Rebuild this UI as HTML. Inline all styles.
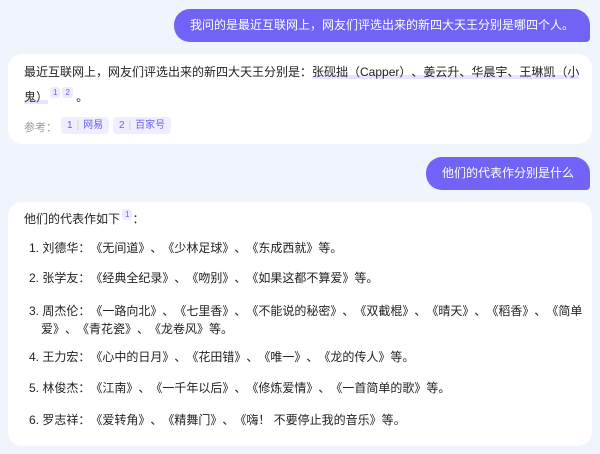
<!DOCTYPE html>
<html><head><meta charset="utf-8"><style>
body{margin:0;width:600px;height:454px;overflow:hidden;background:#f0f4fd;font-family:"Liberation Sans","Noto Sans CJK SC",sans-serif;font-size:12px;color:#222;text-spacing-trim:space-all;}
.ub{position:absolute;right:10px;background:#7063f6;color:#fff;border-radius:16px 16px 4px 16px;height:33px;line-height:33px;padding:0 16px;font-size:12px}
.card{position:absolute;left:8px;right:8px;background:#fff;border-radius:14px}
.t{position:absolute;left:24px;white-space:nowrap}
.sup{display:inline-block;background:#ecebff;color:#6b5ff0;font-size:8px;line-height:11px;padding:0 3px;border-radius:3px;vertical-align:6px;margin-left:2px}
.hl{background:linear-gradient(transparent 70%,#e6e2ff 70%)}
.ref{position:absolute;top:117px;font-size:10px;color:#6b5ff0;background:#efeeff;border-radius:4px;height:17px;line-height:17px;padding:0 6px}
.ref i{font-style:normal;color:#ccc;margin:0 4px}
</style></head><body>
<div class="ub" style="top:9px">我问的是最近互联网上，网友们评选出来的新四大天王分别是哪四个人。</div>
<div class="card" style="top:54px;height:90px"></div>
<div class="t" style="top:63px">最近互联网上，网友们评选出来的新四大天王分别是：<span class="hl">张砚拙（Capper）、姜云升、华晨宇、王琳凯（小</span></div>
<div class="t" style="top:87px"><span class="hl">鬼）</span><span class="sup">1</span><span class="sup">2</span> 。</div>
<div class="t" style="top:119px;font-size:11px;color:#999">参考：</div>
<div class="ref" style="left:61px">1<i>|</i>网易</div>
<div class="ref" style="left:113px">2<i>|</i>百家号</div>
<div class="ub" style="top:157px">他们的代表作分别是什么</div>
<div class="card" style="top:202px;height:244px"></div>
<div class="t" style="top:209px">他们的代表作如下<span class="sup">1</span>：</div>
<div class="t" style="top:239px;left:29px">1. 刘德华：《无间道》、《少林足球》、《东成西就》等。</div>
<div class="t" style="top:269px;left:29px">2. 张学友：《经典全纪录》、《吻别》、《如果这都不算爱》等。</div>
<div class="t" style="top:302px;left:29px">3. 周杰伦：《一路向北》、《七里香》、《不能说的秘密》、《双截棍》、《晴天》、《稻香》、《简单</div>
<div class="t" style="top:320px;left:41px">爱》、《青花瓷》、《龙卷风》等。</div>
<div class="t" style="top:348px;left:29px">4. 王力宏：《心中的日月》、《花田错》、《唯一》、《龙的传人》等。</div>
<div class="t" style="top:379px;left:29px">5. 林俊杰：《江南》、《一千年以后》、《修炼爱情》、《一首简单的歌》等。</div>
<div class="t" style="top:411px;left:29px">6. 罗志祥：《爱转角》、《精舞门》、《嗨！ 不要停止我的音乐》等。</div>
</body></html>
